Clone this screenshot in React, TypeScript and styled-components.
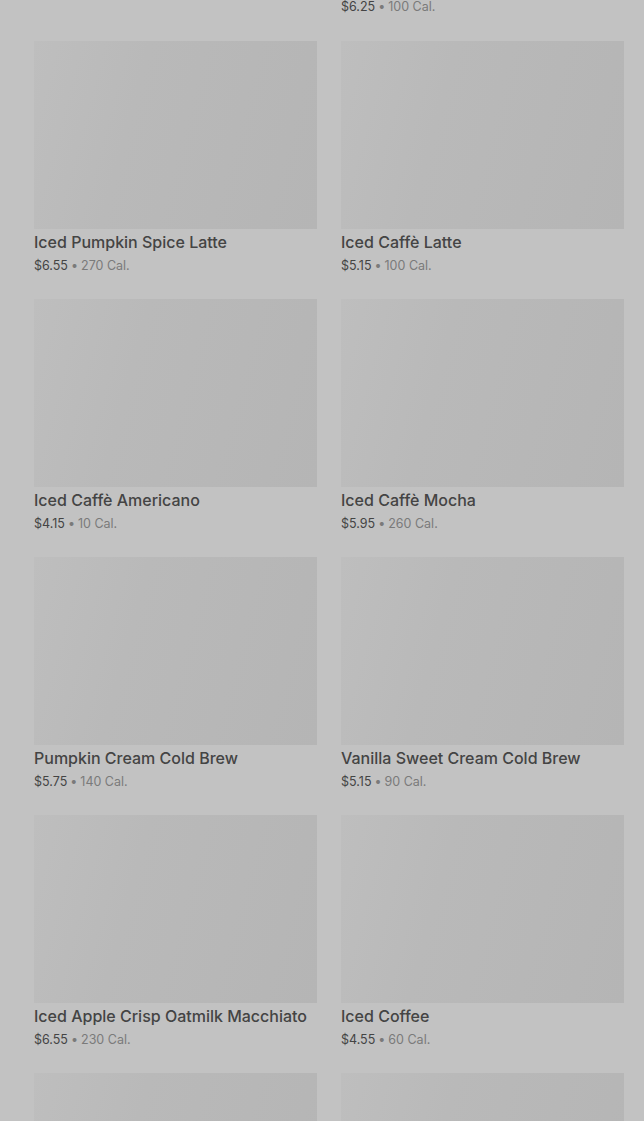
import React from "react";
import styled, { createGlobalStyle } from "styled-components";

const Global = createGlobalStyle`
  html, body { margin: 0; padding: 0; background: #c2c2c2; }
  body { font-family: Inter, "Noto Sans", sans-serif; -webkit-font-smoothing: antialiased; }
`;

const Page = styled.div`
  height: 1121px;
  overflow: hidden;
  background: #c2c2c2;
`;

const Grid = styled.div`
  display: grid;
  grid-template-columns: 283px 283px;
  column-gap: 24px;
  row-gap: 24px;
  padding: 27px 20px 0 34px;
`;

const TopRow = styled.div`
  display: grid;
  grid-template-columns: 283px 283px;
  column-gap: 24px;
  padding: 0 20px 0 34px;
  height: 14px;
`;

const Card = styled.div`
  display: flex;
  flex-direction: column;
  height: 234px;
`;

const Thumb = styled.div`
  height: 188px;
  background: linear-gradient(105deg, #bebebe 0%, #b9b9b9 35%, #b5b5b5 100%);
`;

const Title = styled.div`
  margin-top: 3px;
  font-size: 16px;
  line-height: 20px;
  font-weight: 500;
  color: #444;
  letter-spacing: 0px;
`;

const Meta = styled.div<{ $compact?: boolean }>`
  margin-top: ${(p) => (p.$compact ? "0" : "6px")};
  font-size: 12.5px;
  line-height: ${(p) => (p.$compact ? "14px" : "16px")};
  color: #7a7a7a;
`;

const Price = styled.span`
  color: #444;
`;

const Dot = styled.span`
  margin: 0 3px;
`;

type Item = { name: string; price: string; cal: string };

const items: Item[] = [
  { name: "Iced Pumpkin Spice Latte", price: "$6.55", cal: "270 Cal." },
  { name: "Iced Caffè Latte", price: "$5.15", cal: "100 Cal." },
  { name: "Iced Caffè Americano", price: "$4.15", cal: "10 Cal." },
  { name: "Iced Caffè Mocha", price: "$5.95", cal: "260 Cal." },
  { name: "Pumpkin Cream Cold Brew", price: "$5.75", cal: "140 Cal." },
  { name: "Vanilla Sweet Cream Cold Brew", price: "$5.15", cal: "90 Cal." },
  { name: "Iced Apple Crisp Oatmilk Macchiato", price: "$6.55", cal: "230 Cal." },
  { name: "Iced Coffee", price: "$4.55", cal: "60 Cal." },
  { name: "", price: "", cal: "" },
  { name: "", price: "", cal: "" },
];

const Info = ({ price, cal, compact }: { price: string; cal: string; compact?: boolean }) => (
  <Meta $compact={compact}>
    <Price>{price}</Price>
    <Dot>•</Dot>
    {cal}
  </Meta>
);

export default function App() {
  return (
    <Page>
      <Global />
      <TopRow>
        <div />
        <div>
          <Info price="$6.25" cal="100 Cal." compact />
        </div>
      </TopRow>
      <Grid>
        {items.map((it, i) => (
          <Card key={i}>
            <Thumb />
            {it.name && <Title>{it.name}</Title>}
            {it.price && <Info price={it.price} cal={it.cal} />}
          </Card>
        ))}
      </Grid>
    </Page>
  );
}
